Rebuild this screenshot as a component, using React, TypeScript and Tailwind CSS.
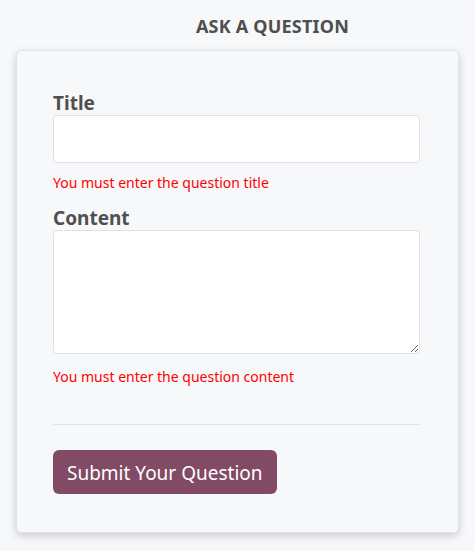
import React from 'react';

export default function App() {
  return (
    <div className="min-h-[551px] bg-[#f7f8fa] pt-[14px] text-[#4f4f4f]" style={{ fontFamily: '"Noto Sans", sans-serif' }}>
      <h1 className="pl-[70px] text-center text-[18px] font-bold leading-[24px] tracking-[0.2px]">ASK A QUESTION</h1>
      <form className="mx-[16px] mt-[12px] rounded-[5px] border border-[#e2e4e8] bg-[#f7f8fa] pb-[38px] pl-[36px] pr-[38px] pt-[40px] shadow-[0_3px_8px_rgba(0,0,0,0.18)]">
        <label className="block text-[19px] font-bold leading-[24px]">Title</label>
        <input className="block h-[48px] w-full rounded-[4px] border border-[#dee2e6] bg-white" />
        <p className="mt-[10px] text-[14px] leading-[20px] text-[#ff0000]">You must enter the question title</p>
        <label className="mt-[13px] block text-[19px] font-bold leading-[24px]">Content</label>
        <textarea className="block h-[124px] w-full rounded-[4px] border border-[#dee2e6] bg-white" />
        <p className="mt-[13px] text-[14px] leading-[20px] text-[#ff0000]">You must enter the question content</p>
        <hr className="mt-[37px] border-[#e0e2e6]" />
        <button type="button" className="mt-[25px] h-[44px] rounded-[6px] bg-[#824a65] px-[14px] pt-[3px] text-[19px] text-white">Submit Your Question</button>
      </form>
    </div>
  );
}
